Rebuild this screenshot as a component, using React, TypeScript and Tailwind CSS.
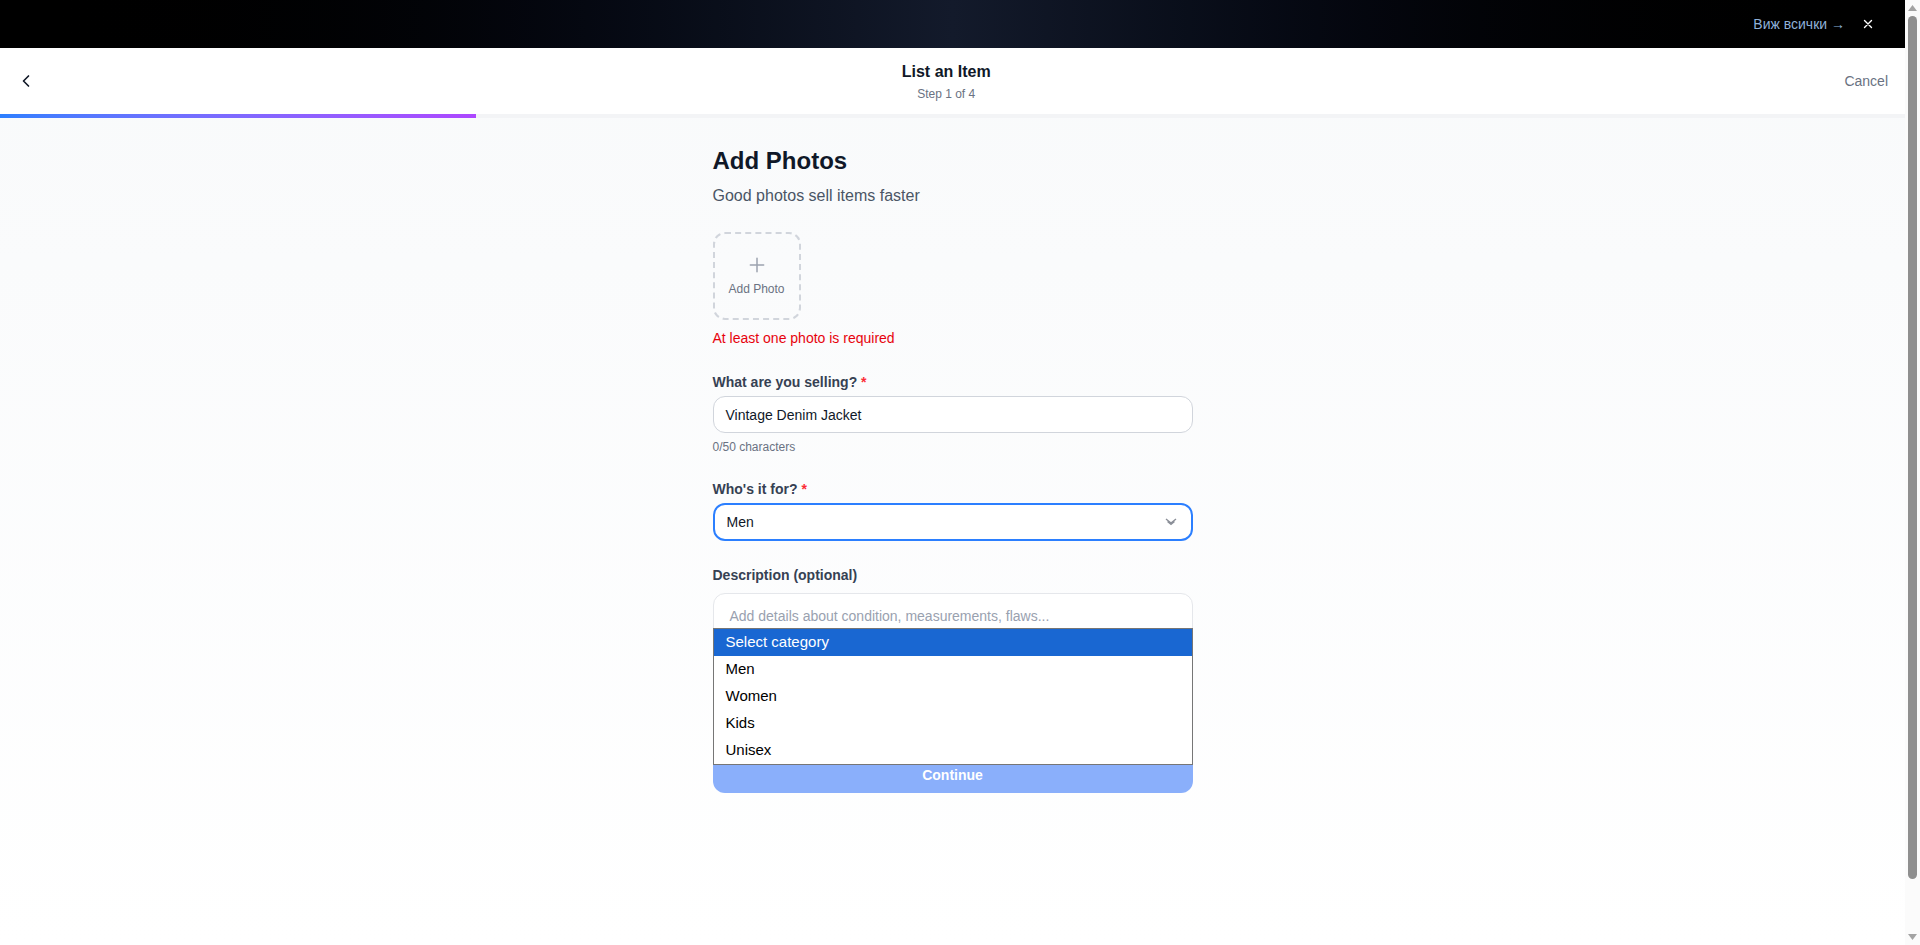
import React from "react";

const options = ["Select category", "Men", "Women", "Kids", "Unisex"];

const ChevronLeft = () => (
  <svg width="20" height="20" viewBox="0 0 24 24" fill="none" stroke="#111827" strokeWidth="2" strokeLinecap="round" strokeLinejoin="round">
    <path d="M15 18l-6-6 6-6" />
  </svg>
);

const CloseIcon = () => (
  <svg width="14" height="14" viewBox="0 0 24 24" fill="none" stroke="#ffffff" strokeWidth="2.4" strokeLinecap="round">
    <path d="M6 6l12 12M18 6L6 18" />
  </svg>
);

// classic browser scrollbar, as seen in the screenshot
const Scrollbar = () => (
  <div className="w-[15px] h-full bg-[#fbfbfb] flex flex-col items-center">
    <svg width="9" height="6" viewBox="0 0 9 6" className="mt-[5px]">
      <path d="M4.5 0L9 6H0z" fill="#a3a3a3" />
    </svg>
    <div className="mt-[5px] w-[9px] flex-1 mb-[55px] rounded-full bg-[#8f8f8f]" />
    <svg width="9" height="6" viewBox="0 0 9 6" className="mb-[5px]">
      <path d="M0 0h9L4.5 6z" fill="#a3a3a3" />
    </svg>
  </div>
);

const App: React.FC = () => {
  return (
    <div className="h-[945px] flex overflow-hidden font-['Liberation_Sans',sans-serif] bg-white">
      <div className="flex-1 flex flex-col min-w-0">
        {/* promo banner */}
        <div className="h-12 flex items-center justify-end pr-[30px] bg-gradient-to-r from-black via-[#131a2b] to-black">
          <div className="flex items-center gap-4">
            <span className="text-sm font-medium text-[#8fb1d9]">Виж всички →</span>
            <CloseIcon />
          </div>
        </div>

        {/* header */}
        <div className="h-[66px] bg-white flex items-center justify-between px-4">
          <button className="w-8 h-8 flex items-center justify-start">
            <ChevronLeft />
          </button>
          <div className="flex flex-col items-center">
            <div className="text-base font-semibold text-gray-900 leading-6">List an Item</div>
            <div className="text-xs text-gray-500 leading-4 mt-[2px]">Step 1 of 4</div>
          </div>
          <button className="text-sm text-gray-500 pr-[1px]">Cancel</button>
        </div>

        {/* progress */}
        <div className="h-1 bg-gray-100">
          <div className="h-1 w-1/4 bg-gradient-to-r from-blue-500 to-purple-500" />
        </div>

        {/* content */}
        <div className="flex-1 bg-gradient-to-b from-gray-50 to-white">
          <div className="relative max-w-[480px] mx-auto pt-[27px] pb-10">
            <h2 className="text-2xl font-bold text-gray-900 leading-8">Add Photos</h2>
            <p className="mt-[7px] text-base text-gray-600 leading-6">Good photos sell items faster</p>

            <div className="mt-6 w-[88px] h-[88px] rounded-xl border-2 border-dashed border-gray-300 flex flex-col items-center justify-center">
              <svg width="20" height="20" viewBox="0 0 24 24" fill="none" stroke="#9ca3af" strokeWidth="1.8" strokeLinecap="round">
                <path d="M12 4v16M4 12h16" />
              </svg>
              <span className="mt-[6px] text-xs text-gray-500">Add Photo</span>
            </div>
            <p className="mt-2 text-sm text-red-600 leading-5">At least one photo is required</p>

            <label className="block mt-6 text-sm font-semibold text-gray-700 leading-5">
              What are you selling? <span className="text-red-500">*</span>
            </label>
            <div className="mt-1 h-[37px] flex items-center px-3 rounded-xl border border-gray-300 bg-white text-sm text-gray-900">
              Vintage Denim Jacket
            </div>
            <p className="mt-[6px] text-xs text-gray-500 leading-4">0/50 characters</p>

            <label className="block mt-6 text-sm font-semibold text-gray-700 leading-5">
              Who's it for? <span className="text-red-500">*</span>
            </label>
            <div className="mt-1 h-[38px] flex items-center justify-between px-3 rounded-xl border-2 border-blue-500 bg-white text-sm text-gray-900">
              <span>Men</span>
              <svg width="12" height="8" viewBox="0 0 12 8" fill="none" stroke="#8b8f98" strokeWidth="1.4" className="mr-[2px]">
                <path d="M1 1l5 4 5-4M2.5 3.5l3.5 2.8 3.5-2.8" />
              </svg>
            </div>

            <label className="block mt-6 text-sm font-semibold text-gray-700 leading-5">Description (optional)</label>
            <div className="mt-2 h-[128px] px-4 py-3 rounded-xl border border-gray-200 bg-white text-sm text-gray-400 leading-5">
              Add details about condition, measurements, flaws...
            </div>

            <button className="mt-8 w-full h-10 pt-1 rounded-xl bg-[#8aaffb] text-sm font-bold text-white">Continue</button>

            {/* native select popup */}
            <div className="absolute left-0 right-0 top-[510px] border border-[#767676] bg-white">
              {options.map((o, i) => (
                <div
                  key={o}
                  className={
                    i === 0
                      ? "h-[27px] flex items-center pl-3 text-[15px] bg-[#1967d2] text-white"
                      : "h-[27px] flex items-center pl-3 text-[15px] text-black"
                  }
                >
                  {o}
                </div>
              ))}
            </div>
          </div>
        </div>
      </div>
      <Scrollbar />
    </div>
  );
};

export default App;
